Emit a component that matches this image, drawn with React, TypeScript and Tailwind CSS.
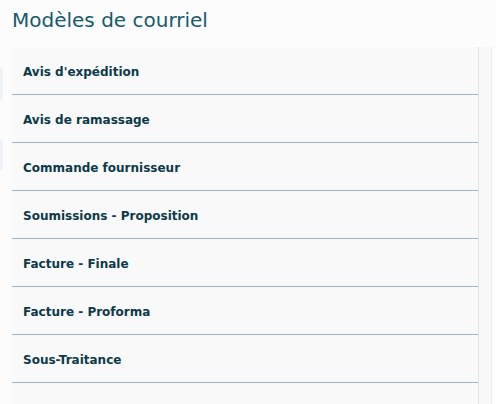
const templates = [
  "Avis d'expédition",
  "Avis de ramassage",
  "Commande fournisseur",
  "Soumissions - Proposition",
  "Facture - Finale",
  "Facture - Proforma",
  "Sous-Traitance",
];

export default function App() {
  return (
    <div className="relative h-[404px] w-[496px] overflow-hidden bg-[#fcfcfc] font-['DejaVu_Sans',Verdana,sans-serif]">
      {/* bits of the menu peeking from behind */}
      <div className="absolute left-[-6px] top-[67px] h-[34px] w-[9px] rounded-md bg-[#eef2f6]" />
      <div className="absolute left-[-6px] top-[139px] h-[32px] w-[9px] rounded-md bg-[#eef2f6]" />

      <h1 className="pl-3 pt-[6px] text-[20px] leading-[28px] text-[#175a6c]">
        Modèles de courriel
      </h1>

      <div className="mt-[13px] flex">
        <div className="ml-3 w-[467px] border-r border-[#e2e2e2] bg-[#f9f9f9]">
          {templates.map((t) => (
            <div
              key={t}
              className="flex h-[48px] items-center border-b border-[#9fb3c6] pl-[11px] pt-[2px] text-[12px] font-bold text-[#0c3a48]"
            >
              {t}
            </div>
          ))}
        </div>
        <div className="h-[400px] w-[13px] border-r border-[#ececec] bg-[#f8f8f8]" />
      </div>
    </div>
  );
}
